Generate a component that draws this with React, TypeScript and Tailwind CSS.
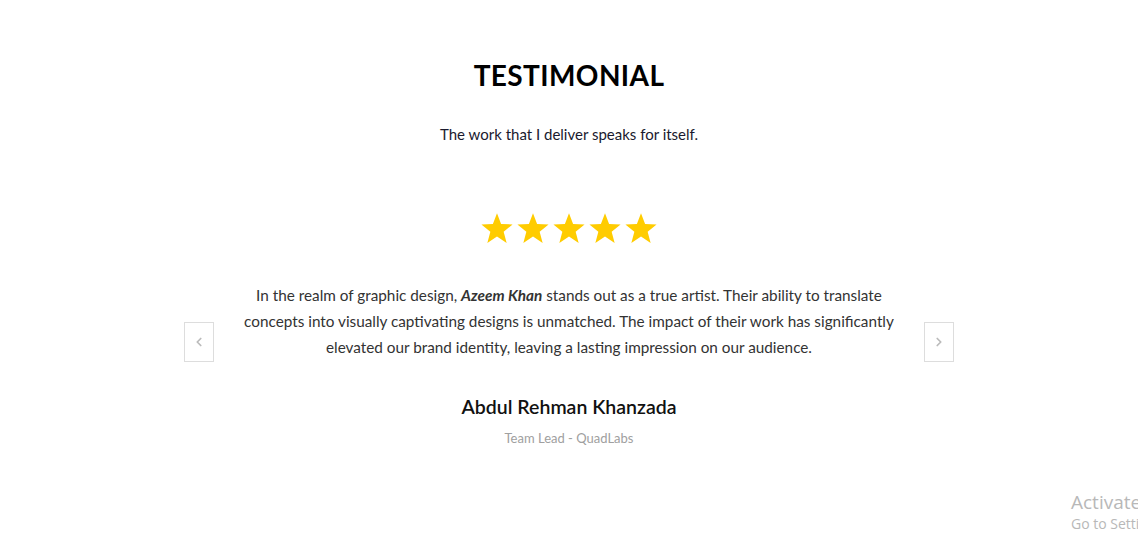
import { ChevronLeft, ChevronRight } from 'lucide-react';

function Star() {
  return (
    <svg viewBox="0 0 24 24" className="w-[34px] h-[34px]" fill="#ffcc00">
      <path d="M12 1.5l2.9 7.6 8.1.4-6.3 5.1 2.1 7.9L12 18l-6.8 4.5 2.1-7.9L1 9.5l8.1-.4z" />
    </svg>
  );
}

export default function App() {
  return (
    <div className="relative w-full h-[536px] bg-white overflow-hidden" style={{ fontFamily: 'Lato, "Open Sans", sans-serif' }}>
      <section className="flex flex-col items-center pt-[55px]">
        <h2 className="text-[28px] leading-[40px] font-bold tracking-[0.4px] text-black">TESTIMONIAL</h2>
        <p className="mt-[27px] text-[15px] leading-[24px] text-[#1a1a2e]">The work that I deliver speaks for itself.</p>

        <div className="mt-[65px] flex items-start">
          <button className="mt-[111px] w-[30px] h-[40px] border border-[#dddddd] flex items-center justify-center text-[#bbbbbb]">
            <ChevronLeft size={14} strokeWidth={3} />
          </button>

          <div className="w-[710px] flex flex-col items-center">
            <div className="flex gap-[2px]">
              <Star />
              <Star />
              <Star />
              <Star />
              <Star />
            </div>
            <p className="mt-[37px] text-center text-[15.3px] leading-[26px] text-[#333333] whitespace-nowrap">
              In the realm of graphic design, <b><i>Azeem Khan</i></b> stands out as a true artist. Their ability to translate
              <br />
              concepts into visually captivating designs is unmatched. The impact of their work has significantly
              <br />
              elevated our brand identity, leaving a lasting impression on our audience.
            </p>
            <h3 className="mt-[33px] text-[19.5px] leading-[28px] font-semibold text-[#111111]">Abdul Rehman Khanzada</h3>
            <p className="mt-[8px] text-[13px] leading-[18px] text-[#a0a0a0]">Team Lead - QuadLabs</p>
          </div>

          <button className="mt-[111px] w-[30px] h-[40px] border border-[#dddddd] flex items-center justify-center text-[#bbbbbb]">
            <ChevronRight size={14} strokeWidth={3} />
          </button>
        </div>
      </section>

      <div className="absolute left-[1071px] top-[490px] whitespace-nowrap text-[#b8b8b8]" style={{ fontFamily: '"Open Sans", sans-serif' }}>
        <div className="text-[19px] leading-[24px]">Activate Windows</div>
        <div className="text-[14px] leading-[20px]">Go to Settings to activate Windows.</div>
      </div>
    </div>
  );
}
